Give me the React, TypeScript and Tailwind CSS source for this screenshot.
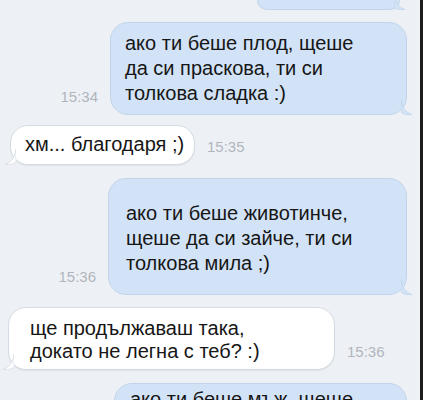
import React from "react";

type Msg = {
    side: "out" | "in";
    lines: string[];
    time?: string;
    box: string;
    row: string;
};

const messages: Msg[] = [
    {
        side: "out",
        lines: ["ако ти беше плод, щеше", "да си праскова, ти си", "толкова сладка :)"],
        time: "15:34",
        box: "w-[297px] pt-[8px] pb-[8px] pl-[14px]",
        row: "mt-[12px]",
    },
    {
        side: "in",
        lines: ["хм... благодаря ;)"],
        time: "15:35",
        box: "w-[185px] pt-[6px] pb-[7px] pl-[14px]",
        row: "mt-[10px] pl-[10px]",
    },
    {
        side: "out",
        lines: ["ако ти беше животинче,", "щеше да си зайче, ти си", "толкова мила ;)"],
        time: "15:36",
        box: "w-[299px] pt-[22px] pb-[18px] pl-[17px]",
        row: "mt-[13px]",
    },
    {
        side: "in",
        lines: ["ще продължаваш така,", "докато не легна с теб? :)"],
        time: "15:36",
        box: "w-[327px] pt-[9px] pb-[6px] pl-[21px] leading-[23px]",
        row: "mt-[12px] pl-[8px]",
    },
    {
        side: "out",
        lines: ["ако ти беше мъж, щеше", "да си"],
        box: "w-[293px] pt-[3px] pb-[8px] pl-[15px]",
        row: "mt-[13px] pr-[2px]",
    },
];

function Tail({ side }: { side: "out" | "in" }) {
    if (side === "out") {
        return (
            <svg className="absolute right-[-7px] bottom-[-1px]" width="12" height="16" viewBox="0 0 12 16">
                <path d="M0 0 C1 8 4 13 11 15.5 C6 16 2 15.2 0 13 Z" fill="#d3e3f7" stroke="#c2d4ea" strokeWidth="0.8" />
            </svg>
        );
    }
    return (
        <svg className="absolute left-[-7px] bottom-[-1px]" width="12" height="16" viewBox="0 0 12 16">
            <path d="M12 0 C11 8 8 13 1 15.5 C6 16 10 15.2 12 13 Z" fill="#ffffff" stroke="#d5dbe3" strokeWidth="0.8" />
        </svg>
    );
}

function Time({ t }: { t: string }) {
    return <span className="mb-[10px] text-[15px] leading-[16px] text-[#b0b5bd] shrink-0">{t}</span>;
}

export default function App() {
    return (
        <div className="flex w-[423px] h-[400px] overflow-hidden font-['Liberation_Sans',Arial,sans-serif]">
            <div className="flex-1 flex flex-col bg-[#edf1f6] text-[#161616] text-[20px] leading-[25px]">
                <div className="flex justify-end pr-[20px]">
                    <div className="relative w-[143px] h-[10px] rounded-b-[16px] bg-[#d3e3f7] border border-t-0 border-[#c2d4ea]">
                        <Tail side="out" />
                    </div>
                </div>
                {messages.map((m, i) =>
                    m.side === "out" ? (
                        <div key={i} className={`flex justify-end items-end gap-[12px] pr-[13px] ${m.row}`}>
                            {m.time && <Time t={m.time} />}
                            <div className={`relative rounded-[18px] bg-[#d3e3f7] border border-[#c2d4ea] ${m.box}`}>
                                {m.lines.map((l) => (
                                    <div key={l} className="whitespace-nowrap">{l}</div>
                                ))}
                                <Tail side="out" />
                            </div>
                        </div>
                    ) : (
                        <div key={i} className={`flex items-end gap-[12px] ${m.row}`}>
                            <div className={`relative rounded-[18px] bg-white border border-[#d5dbe3] shadow-[0_1px_1px_rgba(0,0,0,0.06)] ${m.box}`}>
                                {m.lines.map((l) => (
                                    <div key={l} className="whitespace-nowrap">{l}</div>
                                ))}
                                <Tail side="in" />
                            </div>
                            {m.time && <Time t={m.time} />}
                        </div>
                    )
                )}
            </div>
            <div className="w-[3px] bg-[#1d1d1d]" />
        </div>
    );
}
